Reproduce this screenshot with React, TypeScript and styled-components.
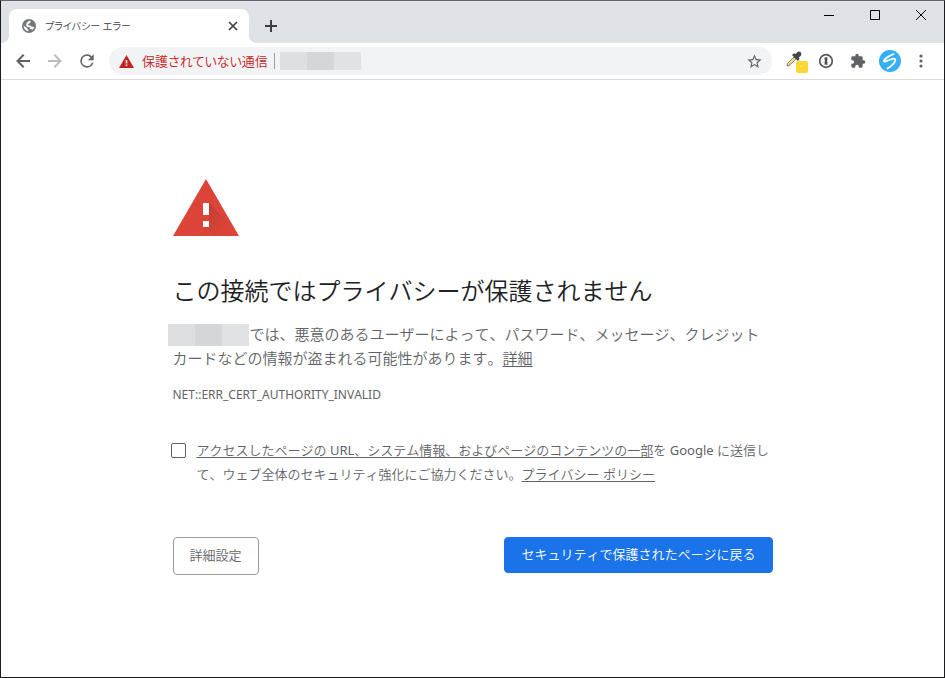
import React from "react";
import styled, { createGlobalStyle } from "styled-components";

const GlobalStyle = createGlobalStyle`
  *, *::before, *::after { box-sizing: border-box; }
  html, body, #root { height: 100%; }
  body {
    margin: 0;
    background: #fff;
    font-family: "Noto Sans", "Noto Sans CJK JP DemiLight", "Noto Sans CJK JP", sans-serif;
    font-kerning: none;
  }
`;

const BrowserWindow = styled.div`
  min-height: 100%;
  display: flex;
  flex-direction: column;
  border: 1px solid #1c1c1e;
  border-top-color: #66666c;
`;

const TitleBar = styled.header`
  display: flex;
  align-items: flex-start;
  height: 42px;
  padding-left: 8px;
  background: #dee1e6;
`;

const Tab = styled.div`
  position: relative;
  align-self: flex-end;
  display: flex;
  align-items: center;
  width: 240px;
  height: 34px;
  padding: 0 9px 0 13px;
  border-radius: 8px 8px 0 0;
  background: #fff;

  &::before,
  &::after {
    content: "";
    position: absolute;
    bottom: 0;
    width: 8px;
    height: 8px;
  }
  &::before {
    right: 100%;
    background: radial-gradient(circle at 0 0, transparent 8px, #fff 8px);
  }
  &::after {
    left: 100%;
    background: radial-gradient(circle at 100% 0, transparent 8px, #fff 8px);
  }
`;

const TabTitle = styled.span`
  flex: 1;
  margin-left: 9px;
  color: #3c4043;
  font-size: 10px;
  line-height: 16px;
  font-feature-settings: "palt";
  white-space: nowrap;
`;

const IconButton = styled.button<{ $width: number; $height: number }>`
  display: flex;
  flex: none;
  align-items: center;
  justify-content: center;
  width: ${(p) => p.$width}px;
  height: ${(p) => p.$height}px;
  padding: 0;
  border: 0;
  background: none;
  color: #5f6368;

  &:disabled { color: #babcbe; }
`;

const NewTabSlot = styled.div`
  align-self: flex-end;
  margin: 0 auto 3px 8px;
  color: #3c4043;
`;

const WindowControls = styled.div`
  display: flex;
`;

const Toolbar = styled.nav`
  display: flex;
  align-items: center;
  height: 37px;
  padding: 0 6px;
  border-bottom: 1px solid #dadce0;
  background: #fff;
`;

const AddressBar = styled.div`
  display: flex;
  flex: 1;
  align-items: center;
  height: 28px;
  margin: 0 8px 0 6px;
  padding: 0 8px 0 10px;
  border-radius: 14px;
  background: #f1f3f4;
`;

const SecurityLabel = styled.span`
  margin-left: 8px;
  padding-right: 6px;
  border-right: 1px solid #9aa0a6;
  color: #c5221f;
  font-size: 13px;
  line-height: 16px;
  font-weight: 350;
  font-feature-settings: "palt";
  white-space: nowrap;
`;

const Redaction = styled.span<{ $height: number }>`
  display: inline-block;
  flex: none;
  width: 81px;
  height: ${(p) => p.$height}px;
  vertical-align: middle;
  background: linear-gradient(90deg, #dedfe0 27px, #d5d6d7 27px 54px, #e0e2e3 54px);
`;

const AddressText = styled.span`
  display: flex;
  flex: 1;
  padding-left: 5px;
`;

const Page = styled.main`
  width: 100%;
  max-width: 600px;
  margin: 0 auto;
  padding: 93px 0 40px;
  color: #5f6368;
`;

const WarningArt = styled.svg`
  display: block;
  width: 66px;
  height: 72px;
`;

const Heading = styled.h1`
  margin: 30px 0 15px;
  color: #202124;
  font-size: 24px;
  line-height: 32px;
  font-weight: 350;
`;

const Message = styled.p`
  margin: 0;
  font-size: 15px;
  line-height: 24px;
  font-weight: 350;

  ${Redaction} {
    margin: -4px 1px -2px -5px;
  }
`;

const TextLink = styled.a`
  color: inherit;
  text-decoration: underline;
  text-underline-offset: 2px;
  text-decoration-skip-ink: none;
`;

const ErrorCode = styled.div`
  margin-top: 13px;
  font-size: 12px;
  line-height: 24px;
`;

const OptIn = styled.div`
  display: flex;
  align-items: flex-start;
  margin-top: 31px;
  font-size: 13px;
  line-height: 24px;
  font-weight: 350;
`;

const Latin = styled.span`
  font-weight: 400;
`;

const Checkbox = styled.input`
  appearance: none;
  flex: none;
  width: 15px;
  height: 15px;
  margin: 5px 11px 0 -2px;
  border: 1px solid #5f6368;
  border-radius: 2px;
  background: #fff;
`;

const Actions = styled.div`
  display: flex;
  align-items: flex-start;
  justify-content: space-between;
  margin-top: 51px;
`;

const ActionButton = styled.button<{ $primary?: boolean }>`
  padding: ${(p) => (p.$primary ? "6px 16px 8px" : "7px 16px 9px")};
  border: 1px solid ${(p) => (p.$primary ? "#1a73e8" : "#9aa0a6")};
  border-radius: 4px;
  background: ${(p) => (p.$primary ? "#1a73e8" : "#fff")};
  color: ${(p) => (p.$primary ? "#fff" : "#5f6368")};
  font-family: inherit;
  font-size: 13px;
  line-height: 20px;
  font-weight: 350;
  font-kerning: none;
`;

const Globe = () => (
  <svg width="14" height="14" viewBox="0 0 14 14" aria-hidden="true">
    <circle cx="7" cy="7" r="7" fill="#737578" />
    <path
      d="M1.6 6.2 4 8.4h1.3v1.4l1.2.9v1.6C3.8 12 1.8 10 1.6 7.300zM5 3.200 7.800 1.600l1 .8-.6 1.700-1.900.8L6.200 6.300l2.500.1 1 1.300h2.500c-.2 1.300-.9 2.500-1.900 3.300L9.100 9.900H7.900L7.600 8H5.200L4.200 6.600V5.100z"
      fill="#f4f5f6"
    />
  </svg>
);

const CloseTab = () => (
  <svg width="10" height="10" viewBox="0 0 10 10" fill="none" stroke="#3c4043" strokeWidth="1.700" aria-hidden="true">
    <path d="M1 1l8 8M9 1l-8 8" />
  </svg>
);

const Plus = () => (
  <svg width="12" height="12" viewBox="0 0 12 12" fill="none" stroke="#3c4043" strokeWidth="2" aria-hidden="true">
    <path d="M6 0v12M0 6h12" />
  </svg>
);

const Minimize = () => (
  <svg width="10" height="10" viewBox="0 0 10 10" aria-hidden="true">
    <path d="M0 5h10v1H0z" fill="#000" />
  </svg>
);

const Maximize = () => (
  <svg width="10" height="10" viewBox="0 0 10 10" aria-hidden="true">
    <path d="M.5.5h9v9h-9z" fill="none" stroke="#000" />
  </svg>
);

const CloseWindow = () => (
  <svg width="10" height="10" viewBox="0 0 10 10" aria-hidden="true">
    <path d="M0 0l10 10M10 0L0 10" stroke="#000" />
  </svg>
);

const Arrow = ({ forward }: { forward?: boolean }) => (
  <svg width="14" height="14" viewBox="0 0 14 14" fill="none" stroke="currentColor" strokeWidth="2" aria-hidden="true">
    <path d={forward ? "M0 7h12M6.300.8 12.500 7l-6.200 6.200" : "M14 7H2M7.700.8 1.500 7l6.200 6.200"} />
  </svg>
);

const Reload = () => (
  <svg width="20" height="20" viewBox="0 0 24 24" fill="currentColor" aria-hidden="true">
    <path d="M17.650 6.350A7.960 7.960 0 0 0 12 4a8 8 0 1 0 7.730 10h-2.080A6 6 0 1 1 12 6c1.660 0 3.140.69 4.220 1.780L13 11h7V4z" />
  </svg>
);

const SmallWarning = () => (
  <svg width="15" height="13" viewBox="0 0 15 13" aria-hidden="true">
    <path d="M7.500 0 15 13H0z" fill="#c5221f" />
    <path d="M6.700 5h1.600v3.500H6.700zM6.700 9.500h1.600V11H6.700z" fill="#f1f3f4" />
  </svg>
);

const Star = () => (
  <svg width="17" height="17" viewBox="0 0 24 24" fill="currentColor" aria-hidden="true">
    <path d="M22 9.240l-7.190-.62L12 2 9.190 8.630 2 9.240l5.460 4.730L5.820 21 12 17.270 18.180 21l-1.630-7.030L22 9.240zM12 15.400l-3.760 2.270 1-4.280-3.320-2.880 4.380-.38L12 6.100l1.710 4.040 4.380.38-3.320 2.880 1 4.280L12 15.400z" />
  </svg>
);

const Eyedropper = () => (
  <svg width="24" height="24" viewBox="0 0 24 24" aria-hidden="true">
    <path d="M10 8 3.500 14.500 3 17l2.500-.5L12 10z" fill="#f2df9a" stroke="#77746c" />
    <path d="M5 14.500h3L5.500 16.200z" fill="#d8b63c" />
    <path d="M8 6 10 4.300l1.700.6 1.200-1.500c1.200-1.200 2.800-1.100 3.800-.1s1 2.600-.2 3.600L15 8.200l.5 1.900L14 12z" fill="#45464a" />
    <rect x="12" y="12" width="12" height="12" rx="2" fill="#fdd835" />
    <path d="M16.500 17.500h2" stroke="#fff4b8" />
  </svg>
);

const KeyRing = () => (
  <svg width="16" height="16" viewBox="0 0 16 16" aria-hidden="true">
    <circle cx="8" cy="8" r="6.300" fill="#fff" stroke="#55575a" strokeWidth="1.700" />
    <path d="M6.600 4.300h2.800v3L8.900 8l.5.700v3H6.600v-3l.5-.7-.5-.7z" fill="#4c4e51" />
  </svg>
);

const Puzzle = () => (
  <svg width="16" height="16" viewBox="0 0 24 24" fill="currentColor" aria-hidden="true">
    <path d="M20.500 11H19V7a2 2 0 0 0-2-2h-4V3.500a2.500 2.500 0 0 0-5 0V5H4a2 2 0 0 0-2 2v3.800h1.500a2.700 2.700 0 0 1 0 5.400H2V20a2 2 0 0 0 2 2h3.800v-1.500a2.700 2.700 0 0 1 5.400 0V22H17a2 2 0 0 0 2-2v-4h1.500a2.500 2.500 0 0 0 0-5z" />
  </svg>
);

const Avatar = () => (
  <svg width="22" height="22" viewBox="0 0 22 22" aria-hidden="true">
    <circle cx="11" cy="11" r="11" fill="#35aff7" />
    <path
      d="M14.500 4C10 6 4.500 9.500 5 11.300c.7 1.800 9.200-4.300 11-2.300 1.500 2.200-3 7-7.500 9.500"
      fill="none"
      stroke="#fff"
      strokeWidth="1.800"
      strokeLinecap="round"
    />
  </svg>
);

const Dots = () => (
  <svg width="4" height="14" viewBox="0 0 4 14" fill="currentColor" aria-hidden="true">
    <circle cx="2" cy="2" r="1.600" />
    <circle cx="2" cy="7" r="1.600" />
    <circle cx="2" cy="12" r="1.600" />
  </svg>
);

export default function App() {
  return (
    <>
      <GlobalStyle />
      <BrowserWindow>
        <TitleBar>
          <Tab>
            <Globe />
            <TabTitle>プライバシー エラー</TabTitle>
            <IconButton $width={14} $height={16} aria-label="タブを閉じる">
              <CloseTab />
            </IconButton>
          </Tab>
          <NewTabSlot>
            <IconButton $width={28} $height={28} aria-label="新しいタブ">
              <Plus />
            </IconButton>
          </NewTabSlot>
          <WindowControls>
            <IconButton $width={46} $height={28} aria-label="最小化">
              <Minimize />
            </IconButton>
            <IconButton $width={46} $height={28} aria-label="最大化">
              <Maximize />
            </IconButton>
            <IconButton $width={46} $height={28} aria-label="閉じる">
              <CloseWindow />
            </IconButton>
          </WindowControls>
        </TitleBar>

        <Toolbar>
          <IconButton $width={32} $height={28} aria-label="戻る">
            <Arrow />
          </IconButton>
          <IconButton $width={32} $height={28} aria-label="進む" disabled>
            <Arrow forward />
          </IconButton>
          <IconButton $width={32} $height={28} aria-label="再読み込み">
            <Reload />
          </IconButton>
          <AddressBar>
            <SmallWarning />
            <SecurityLabel>保護されていない通信</SecurityLabel>
            <AddressText>
              <Redaction $height={18} />
            </AddressText>
            <IconButton $width={20} $height={20} aria-label="ブックマークに追加">
              <Star />
            </IconButton>
          </AddressBar>
          <IconButton $width={32} $height={32} aria-label="カラーピッカー">
            <Eyedropper />
          </IconButton>
          <IconButton $width={28} $height={28} aria-label="パスワード管理">
            <KeyRing />
          </IconButton>
          <IconButton $width={36} $height={28} aria-label="拡張機能">
            <Puzzle />
          </IconButton>
          <IconButton $width={28} $height={28} aria-label="プロフィール">
            <Avatar />
          </IconButton>
          <IconButton $width={34} $height={28} aria-label="メニュー">
            <Dots />
          </IconButton>
        </Toolbar>

        <Page>
          <WarningArt viewBox="0 0 66 72" aria-hidden="true">
            <defs>
              <linearGradient id="shade" x1="0" y1="0" x2="1" y2="1">
                <stop offset="0" stopColor="#a5342a" stopOpacity="0.700" />
                <stop offset="1" stopColor="#db4437" stopOpacity="0" />
              </linearGradient>
            </defs>
            <path d="M33 6 66 63H0z" fill="#db4437" />
            <path d="M36 30 51 45l7 18H43L30 54h6z" fill="url(#shade)" />
            <path d="M30 30h6v12h-6zM30 48h6v6h-6z" fill="#fff" />
          </WarningArt>
          <Heading>この接続ではプライバシーが保護されません</Heading>
          <Message>
            <Redaction $height={22} />
            では、悪意のあるユーザーによって、パスワード、メッセージ、クレジット カードなどの情報が盗まれる可能性があります。
            <TextLink href="#details">詳細</TextLink>
          </Message>
          <ErrorCode>NET::ERR_CERT_AUTHORITY_INVALID</ErrorCode>
          <OptIn>
            <Checkbox type="checkbox" id="opt-in" />
            <label htmlFor="opt-in">
              <TextLink href="#report">
                アクセスしたページの <Latin>URL</Latin>、システム情報、およびページのコンテンツの一部
              </TextLink>
              を <Latin>Google</Latin> に送信して、ウェブ全体のセキュリティ強化にご協力ください。
              <TextLink href="#privacy">プライバシー ポリシー</TextLink>
            </label>
          </OptIn>
          <Actions>
            <ActionButton type="button">詳細設定</ActionButton>
            <ActionButton type="button" $primary>
              セキュリティで保護されたページに戻る
            </ActionButton>
          </Actions>
        </Page>
      </BrowserWindow>
    </>
  );
}
